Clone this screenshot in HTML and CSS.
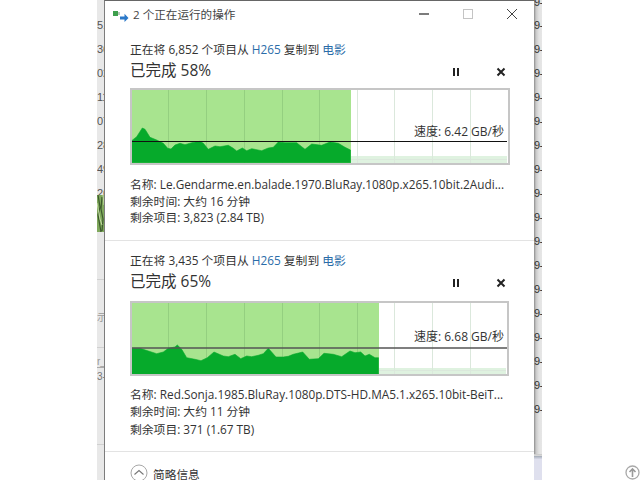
FILE: index.html
```html
<!DOCTYPE html>
<html lang="zh-CN">
<head>
<meta charset="utf-8">
<title>2 个正在运行的操作</title>
<link rel="stylesheet" href="styles.css">
</head>
<body>
<div class="page">
  <aside class="strip-left">
    <div class="cut-row">51</div>
    <div class="cut-row">36</div>
    <div class="cut-row">02</div>
    <div class="cut-row">11</div>
    <div class="cut-row">07</div>
    <div class="cut-row">28</div>
    <div class="cut-row">49</div>
    <div class="cut-row short">26</div>
    <svg class="photo" viewBox="0 0 7 37" aria-hidden="true">
      <rect width="7" height="37" fill="#7fa85c"/>
      <path d="M1 0 L3 12 L1 20 L4 37M5 2 L4 14 L6 24 L5 36" stroke="#3c5a2c" stroke-width="1.2" fill="none"/>
      <path d="M0 8 L3 24 L5 30M6 0 L7 10" stroke="#c3d9a4" stroke-width="1" fill="none"/>
    </svg>
    <div class="low low-a"></div>
    <div class="low low-b">示</div>
    <div class="low low-c"></div>
    <div class="low low-d">r_</div>
    <div class="low low-e">3-</div>
    <div class="low low-f"></div>
  </aside>

  <main class="window">
    <header class="titlebar">
      <svg class="title-icon" viewBox="0 0 16 12" aria-hidden="true">
        <rect x="0" y="1" width="5" height="5" fill="#3d9f4d"/>
        <rect x="5" y="2" width="2" height="3" fill="#b9c9bb"/>
        <path d="M7 6.5h4.5V3.8L15.5 8l-4 4V9.5H7z" fill="#2b79c9"/>
      </svg>
      <span class="title-text">2 个正在运行的操作</span>
      <div class="win-controls">
        <svg class="win-btn" viewBox="0 0 12 12" aria-hidden="true"><path d="M1 6h10" stroke="#444" stroke-width="1.4"/></svg>
        <svg class="win-btn" viewBox="0 0 12 12" aria-hidden="true"><rect x="1.5" y="1.5" width="9" height="9" fill="none" stroke="#c4c4c4"/></svg>
        <svg class="win-btn" viewBox="0 0 12 12" aria-hidden="true"><path d="M1 1l10 10M11 1L1 11" stroke="#444" stroke-width="1"/></svg>
      </div>
    </header>

    <section class="job job-one">
      <p class="job-line">正在将 6,852 个项目从 <span class="link">H265</span> 复制到 <span class="link">电影</span></p>
      <div class="job-head">
        <h2 class="percent">已完成 58%</h2>
        <div class="job-actions">
          <svg class="action" viewBox="0 0 10 10" aria-hidden="true"><path d="M2 1h2v8H2zM6 1h2v8H6z" fill="#222"/></svg>
          <svg class="action" viewBox="0 0 10 10" aria-hidden="true"><path d="M1.5 1.5l7 7M8.5 1.5l-7 7" stroke="#222" stroke-width="2"/></svg>
        </div>
      </div>
      <div class="chart chart-one">
        <svg class="graph" viewBox="130 88 380 77" aria-hidden="true">
          <rect x="130" y="88" width="380" height="77" fill="#fff"/>
          <rect x="351" y="156" width="156" height="7" fill="#dff2e0"/>
          <rect x="132" y="90" width="219" height="73" fill="#a8e48f"/>
          <path class="grid-on" d="M168.5 90v73M206.5 90v73M244.5 90v73M282.5 90v73M319.5 90v73"/>
          <path class="grid-off" d="M357.5 90v73M394.5 90v73M432.5 90v73M470.5 90v73M351 159.5h156"/>
          <polygon class="flow" points="131.7,140.7 136.7,136.7 142.3,128 145,129.3 150,137.3 156.7,140 163.3,143.3 167.7,148.3 171,149 175,145 180,143.3 185,144.7 191.7,142.7 200,141.3 203.3,143.3 208.3,149.3 215,146 220,146.7 228.3,145.3 233.3,148.3 236.7,151 242.3,148 246.7,150.7 251.7,148.7 261.7,150.7 268.3,148 273.3,147.3 278.3,142 285,142.7 296.7,142.7 301.7,146.7 305,149.3 311.7,144 321.7,145.3 330,142 338.3,143.3 345,147.3 350.5,150 350.5,162.7 132,162.7"/>
          <path d="M132 141.5h375" stroke="#111" stroke-width="1.2"/>
          <rect x="131" y="89" width="378" height="75" fill="none" stroke="#c6c6c6" stroke-width="2"/>
        </svg>
        <span class="speed speed-one">速度: 6.42 GB/秒</span>
      </div>
      <div class="info">
        <p>名称: Le.Gendarme.en.balade.1970.BluRay.1080p.x265.10bit.2Audi...</p>
        <p>剩余时间: 大约 16 分钟</p>
        <p>剩余项目: 3,823 (2.84 TB)</p>
      </div>
    </section>

    <section class="job job-two">
      <p class="job-line">正在将 3,435 个项目从 <span class="link">H265</span> 复制到 <span class="link">电影</span></p>
      <div class="job-head">
        <h2 class="percent">已完成 65%</h2>
        <div class="job-actions">
          <svg class="action" viewBox="0 0 10 10" aria-hidden="true"><path d="M2 1h2v8H2zM6 1h2v8H6z" fill="#222"/></svg>
          <svg class="action" viewBox="0 0 10 10" aria-hidden="true"><path d="M1.5 1.5l7 7M8.5 1.5l-7 7" stroke="#222" stroke-width="2"/></svg>
        </div>
      </div>
      <div class="chart chart-two">
        <svg class="graph" viewBox="130 300 379 75" aria-hidden="true">
          <rect x="130" y="300" width="379" height="75" fill="#fff"/>
          <rect x="379" y="367" width="127" height="6" fill="#dff2e0"/>
          <rect x="132" y="302" width="247" height="71" fill="#a8e48f"/>
          <path class="grid-on" d="M168.5 302v71M206.5 302v71M244.5 302v71M282.5 302v71M319.5 302v71M357.5 302v71"/>
          <path class="grid-off" d="M394.5 302v71M432.5 302v71M470.5 302v71M379 369.5h127"/>
          <polygon class="flow" points="132,347.3 140,347.3 148.3,350 156.7,352.7 163.3,351 168.3,347.3 175,346 177.3,344 181.7,348.3 186.7,356.7 195,358.3 201,359.7 207.3,356.7 214,351 223.3,355 228.3,355.7 235,353.3 240.7,357.7 246.7,355 251.7,355.7 258.3,354.3 263.3,352.7 268.3,347.3 276,356 283.3,356 288.3,355.3 293.3,353.3 302.7,351 309.3,358.3 318.3,357.7 324,352.3 333.3,353.3 341.7,355.7 350,350 355,351.7 360.7,351 365,355 369.3,353.3 375,356.7 378.5,356.7 378.5,373 132,373"/>
          <path d="M132 347h375" stroke="#555" stroke-width="1.6"/>
          <rect x="131" y="301" width="377" height="73" fill="none" stroke="#c6c6c6" stroke-width="2"/>
        </svg>
        <span class="speed speed-two">速度: 6.68 GB/秒</span>
      </div>
      <div class="info">
        <p>名称: Red.Sonja.1985.BluRay.1080p.DTS-HD.MA5.1.x265.10bit-BeiT...</p>
        <p>剩余时间: 大约 11 分钟</p>
        <p>剩余项目: 371 (1.67 TB)</p>
      </div>
    </section>

    <footer class="summary">
      <svg class="chevron" viewBox="0 0 18 18" aria-hidden="true">
        <circle cx="9" cy="9" r="8" fill="none" stroke="#a8a8a8"/>
        <path d="M4.5 10.5L9 6.5l4.5 4" fill="none" stroke="#777" stroke-width="1.1"/>
      </svg>
      <span>简略信息</span>
    </footer>
  </main>

  <aside class="strip-right">
    <div class="tick first">9-</div>
    <div class="tick">9-</div>
    <div class="tick">9-</div>
    <div class="tick">9-</div>
    <div class="tick">9-</div>
    <div class="tick">9-</div>
    <div class="tick">9-</div>
    <div class="tick">9-</div>
    <div class="tick">9-</div>
    <div class="tick">9-</div>
    <div class="tick">9-</div>
    <div class="tick">9-</div>
    <div class="tick">9-</div>
    <div class="tick">9-</div>
    <div class="tick">9-</div>
    <div class="tick">9-</div>
    <div class="tick">9-</div>
    <div class="tick">9-</div>
    <div class="strip-end"></div>
  </aside>
</div>

<svg class="to-top" viewBox="0 0 15 15" aria-hidden="true">
  <circle cx="7.5" cy="7.5" r="6.5" fill="#fff" stroke="#a9a9a9" stroke-width="1.3"/>
  <path d="M7.5 12V4M4.5 7l3-3 3 3" fill="none" stroke="#9a9a9a" stroke-width="1.6"/>
</svg>
</body>
</html>
```
FILE: styles.css
```css
* { box-sizing: border-box; }
html, body { margin: 0; padding: 0; background: #fff; }
body {
  width: 640px;
  height: 480px;
  overflow: hidden;
  font-family: "Open Sans", "Noto Sans CJK SC", sans-serif;
  color: #333;
}
p, h2 { margin: 0; font-weight: 400; }

.page { display: flex; height: 480px; padding-left: 97px; }

/* Background content peeking out on the left */
.strip-left {
  width: 7px;
  flex: none;
  overflow: hidden;
  background: #e8e8e8;
  padding-top: 13px;
  font-family: "Liberation Sans", sans-serif;
  font-size: 11px;
  color: #555;
}
.cut-row { height: 24px; line-height: 24px; white-space: nowrap; }
.cut-row.short { height: 14px; }
.photo { display: block; width: 7px; height: 37px; }
.low { white-space: nowrap; color: #999; font-size: 10px; line-height: 12px; border-bottom: 1px solid transparent; }
.low-a { height: 48px; border-bottom-color: #d0d0d0; }
.low-b { height: 44px; padding-top: 32px; }
.low-c { height: 24px; border-bottom-color: #d0d0d0; }
.low-d { height: 20px; padding-top: 8px; border-bottom-color: #aaa; }
.low-e { height: 17px; padding-top: 3px; color: #777; }
.low-f { height: 60px; border-bottom-color: #d0d0d0; }

/* Dialog */
.window {
  width: 430px;
  height: 480px;
  flex: none;
  background: #fff;
  border-left: 1px solid #7c7c7c;
  border-top: 1px solid #666;
  display: flex;
  flex-direction: column;
  overflow: hidden;
}
.titlebar {
  height: 28px;
  flex: none;
  display: flex;
  align-items: center;
  padding-left: 8px;
  font-size: 11.6px;
  color: #444;
}
.title-icon { width: 16px; height: 12px; margin-right: 4px; margin-top: 1px; }
.title-text { line-height: 28px; }
.win-controls {
  margin-left: auto;
  display: flex;
  gap: 32px;
  padding-right: 16px;
  padding-bottom: 2px;
}
.win-btn { width: 12px; height: 12px; display: block; }

.job { flex: none; padding: 11px 24px 0 25px; border-bottom: 1px solid #e3e3e3; }
.job-one { height: 212px; }
.job-two { height: 211px; padding-top: 10px; }
.job-line { font-size: 11.8px; line-height: 18px; white-space: nowrap; }
.link { color: #2a6ca8; }
.job-head { display: flex; align-items: center; justify-content: space-between; height: 24px; }
.job-two .job-head { height: 25px; }
.percent { font-size: 15.5px; line-height: 24px; margin-bottom: 1px; color: #333; }
.job-actions { display: flex; gap: 35px; padding-right: 4px; padding-top: 3px; }
.action { width: 10px; height: 10px; display: block; }

.chart { position: relative; width: 380px; }
.chart-one { height: 77px; margin-top: 6px; }
.chart-two { height: 75px; margin-top: 7px; }
.graph { display: block; width: 100%; height: 100%; }
.chart-two .graph { width: 379px; }
.grid-on { stroke: #94cf80; stroke-width: 1; fill: none; }
.grid-off { stroke: #dbe8dc; stroke-width: 1; fill: none; }
.flow { fill: #06aa2b; stroke: #06aa2b; stroke-width: 0.6; stroke-linejoin: round; }
.speed {
  position: absolute;
  right: 6px;
  font-size: 12px;
  line-height: 16px;
  white-space: nowrap;
  color: #333;
}
.speed-one { top: 36px; }
.speed-two { top: 28px; }

.info { margin-top: 11px; font-size: 11.8px; line-height: 16.5px; white-space: nowrap; }
.job-two .info { margin-top: 10px; line-height: 17.3px; }

.summary {
  flex: 1 1 0;
  min-height: 0;
  display: flex;
  align-items: center;
  gap: 5px;
  padding-left: 25px;
  padding-top: 14px;
  font-size: 11.7px;
  color: #333;
}
.chevron { width: 18px; height: 18px; flex: none; }

/* Background content peeking out on the right */
.strip-right {
  width: 8px;
  flex: none;
  display: flex;
  flex-direction: column;
  overflow: hidden;
  background: linear-gradient(to right, #8d8d8d 0, #c9c9c9 2px, #e2e2e2 5px, #e6e6e6 100%);
  font-family: "Liberation Sans", sans-serif;
  font-size: 11px;
  color: #333;
}
.tick { height: 24px; line-height: 24px; white-space: nowrap; flex: none; letter-spacing: -0.5px; }
.tick.first { height: 13px; line-height: 4px; }
.strip-end { flex: 1; background: linear-gradient(to bottom, transparent 0, transparent 56%, #c8c8c8 56%, #e0e0e0 60%, #a9b0bc 60%, #dfe0ee 65%); }

.to-top { position: absolute; left: 625px; top: 465px; width: 15px; height: 15px; }
```
